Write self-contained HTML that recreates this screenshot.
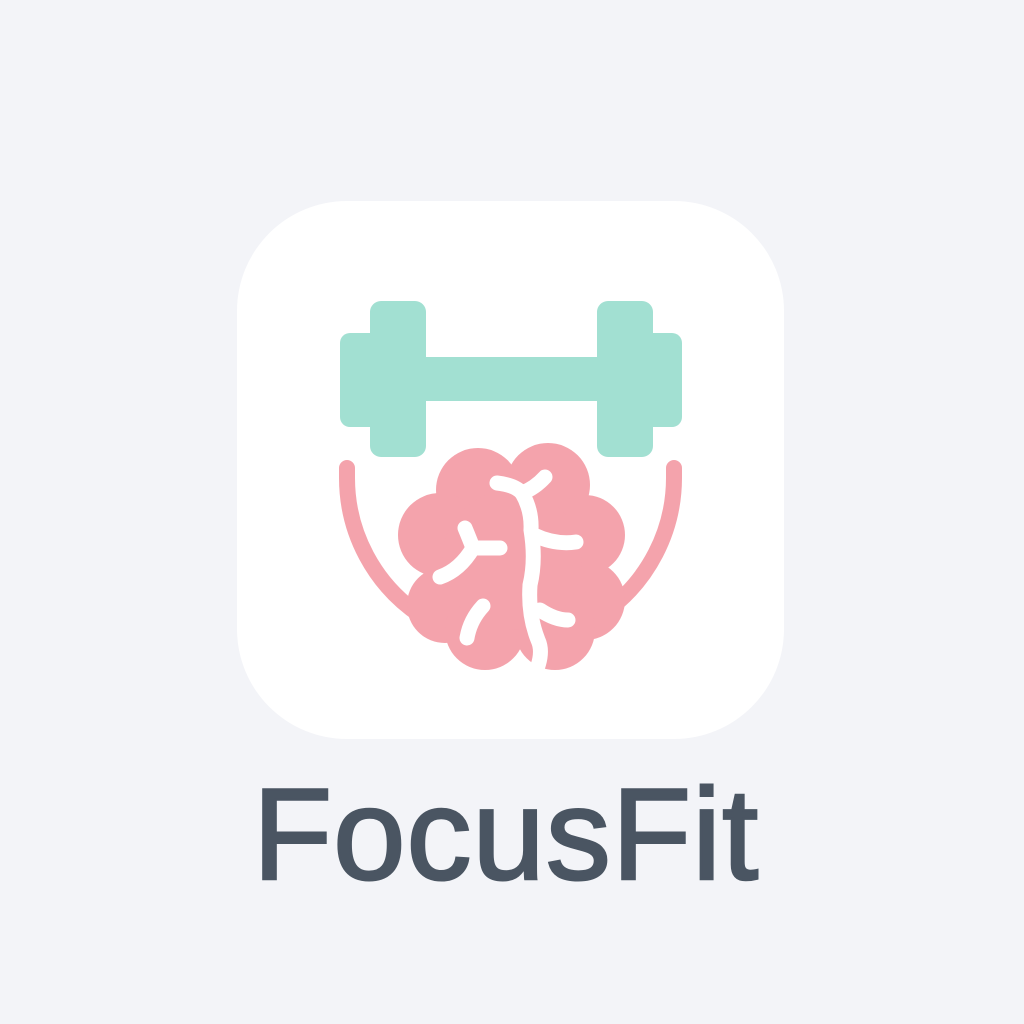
<!DOCTYPE html>
<html><head><style>
html,body{margin:0;padding:0;width:1024px;height:1024px;background:#f3f4f8;overflow:hidden}
.card{position:absolute;left:237px;top:201px;width:547px;height:538px;background:#fff;border-radius:110px}
.t{position:absolute;left:-6px;width:1024px;top:764px;text-align:center;font-family:"Liberation Sans",sans-serif;font-size:130px;color:#4a5562;line-height:140px;letter-spacing:1px;-webkit-text-stroke:2.5px #4a5562}
svg{position:absolute;left:0;top:0}
</style></head><body>
<div class="card"></div>
<svg width="1024" height="1024" viewBox="0 0 1024 1024">
<g fill="#a2e0d2">
<rect x="370" y="301" width="56" height="156" rx="11"/>
<rect x="340" y="333" width="40" height="94" rx="10"/>
<rect x="597" y="301" width="56" height="156" rx="11"/>
<rect x="643" y="333" width="39" height="94" rx="10"/>
<rect x="420" y="357" width="184" height="44"/>
</g>
<path d="M347 468 L347 478 A165 165 0 0 0 420 615 M674 468 L674 478 A165 165 0 0 1 605 612" fill="none" stroke="#f4a3ac" stroke-width="16" stroke-linecap="round"/>
<g fill="#f4a3ac">
<circle cx="478" cy="490" r="42"/>
<circle cx="548" cy="485" r="42"/>
<circle cx="440" cy="535" r="42"/>
<circle cx="585" cy="535" r="40"/>
<circle cx="445" cy="605" r="38"/>
<circle cx="585" cy="600" r="40"/>
<circle cx="485" cy="630" r="40"/>
<circle cx="555" cy="630" r="40"/>
<circle cx="512" cy="560" r="70"/>
</g>
<g fill="none" stroke="#fff" stroke-width="15" stroke-linecap="round">
<path d="M497 483 Q515 485 522 493 Q532 510 531 530 Q536 560 530 585 Q528 615 538 640 Q545 655 532 680"/>
<path d="M522 493 Q535 488 545 477"/>
<path d="M534 535 Q555 545 576 542"/>
<path d="M540 610 Q555 620 568 620"/>
<path d="M465 528 Q470 540 473 548 Q488 548 500 548"/>
<path d="M473 548 Q460 570 440 577"/>
<path d="M483 606 Q470 620 467 638"/>
</g>
</svg>
<div class="t">FocusFit</div>
</body></html>
